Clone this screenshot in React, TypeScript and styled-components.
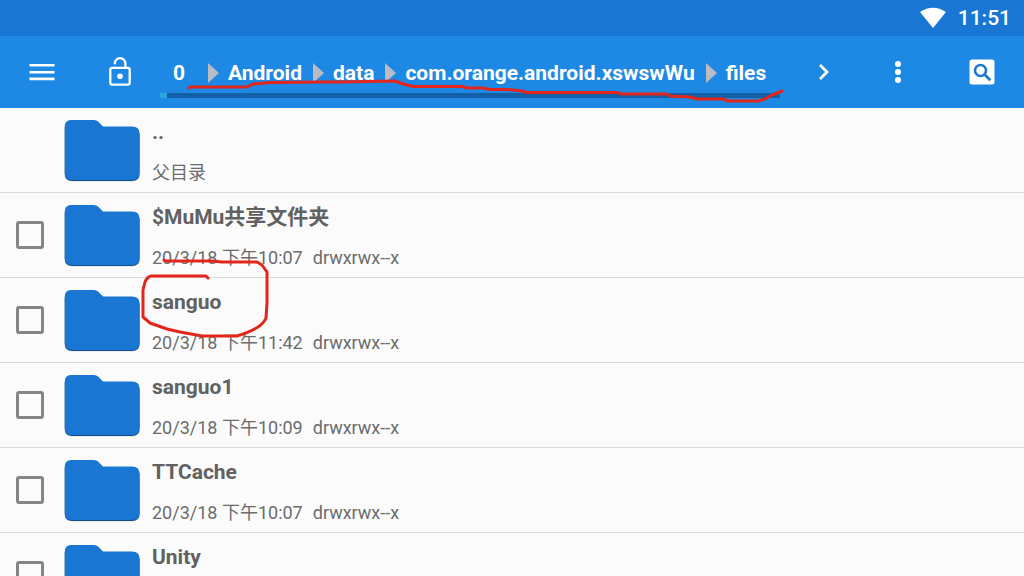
import React from "react";
import styled, { createGlobalStyle } from "styled-components";

const GlobalStyle = createGlobalStyle`
  * { box-sizing: border-box; }
  body {
    margin: 0;
    background: #fbfbfb;
    font-family: Roboto, "Noto Sans CJK SC", sans-serif;
  }
`;

const Screen = styled.div`
  position: relative;
  display: flex;
  flex-direction: column;
  height: 100vh;
  overflow: hidden;
`;

const StatusBar = styled.div`
  display: flex;
  flex: none;
  align-items: center;
  justify-content: flex-end;
  gap: 12px;
  height: 36px;
  padding: 0 13px 0 12px;
  background: #1976d2;
  color: #fff;
  font-size: 21px;
  font-weight: 500;
  line-height: 36px;
`;

const Toolbar = styled.header`
  display: flex;
  flex: none;
  align-items: stretch;
  height: 72px;
  background: #1e88e5;
`;

const IconButton = styled.button<{ $width: number; $gap?: number }>`
  display: flex;
  flex: none;
  align-items: center;
  justify-content: center;
  width: ${(p) => p.$width}px;
  margin-left: ${(p) => p.$gap ?? 0}px;
  padding: 0;
  border: 0;
  background: none;
  color: #fff;
`;

const PathArea = styled.nav`
  display: flex;
  flex: 1;
  flex-direction: column;
  min-width: 0;
  margin-left: 4px;
  padding-bottom: 10px;
`;

const Crumbs = styled.ol`
  display: flex;
  flex: 1;
  align-items: center;
  margin: 0;
  padding: 16px 12px 0 13px;
  list-style: none;
`;

const Crumb = styled.li`
  display: flex;
  align-items: center;
  flex: none;

  &:first-child a { min-width: 24px; }
`;

const CrumbLink = styled.a`
  color: #fff;
  font-size: 21px;
  font-weight: 700;
  line-height: 24px;
  text-decoration: none;
`;

const CrumbArrow = styled.svg`
  margin: 0 9px 0 11px;
`;

const StorageTrack = styled.div`
  height: 5px;
  background: #1460a6;
`;

const StorageFill = styled.div`
  width: 7px;
  height: 100%;
  background: #2ea3dd;
`;

const FileList = styled.ul`
  flex: 1;
  min-height: 0;
  margin: 0;
  padding: 0;
  overflow: hidden;
  list-style: none;
`;

const Row = styled.li`
  display: flex;
  height: 85px;
  border-bottom: 1px solid #d9d9d9;
`;

const CheckCell = styled.div`
  display: flex;
  flex: none;
  align-items: center;
  width: 60px;
  padding-left: 16px;
`;

const Checkbox = styled.input`
  appearance: none;
  width: 28px;
  height: 28px;
  margin: 0;
  border: 3px solid #858585;
  border-radius: 3px;
`;

const FolderSvg = styled.svg`
  flex: none;
  margin: 8px 8px 0 0;
`;

const Details = styled.label`
  display: flex;
  flex: 1;
  flex-direction: column;
  justify-content: space-between;
  min-width: 0;
  padding: 12px 0 7px;
  color: #616161;
`;

const Name = styled.span`
  font-size: 21px;
  font-weight: 700;
  line-height: 24px;
`;

const Meta = styled.span`
  display: flex;
  gap: 10px;
  color: #6c6c6c;
  font-size: 18px;
  line-height: 24px;
`;

const Annotations = styled.svg`
  position: absolute;
  top: 0;
  left: 0;
  pointer-events: none;
`;

const path = ["0", "Android", "data", "com.orange.android.xswswWu", "files"];

type Entry = { name: string; meta: string[]; parent?: boolean };

const entries: Entry[] = [
  { name: "..", meta: ["父目录"], parent: true },
  { name: "$MuMu共享文件夹", meta: ["20/3/18 下午10:07", "drwxrwx--x"] },
  { name: "sanguo", meta: ["20/3/18 下午11:42", "drwxrwx--x"] },
  { name: "sanguo1", meta: ["20/3/18 下午10:09", "drwxrwx--x"] },
  { name: "TTCache", meta: ["20/3/18 下午10:07", "drwxrwx--x"] },
  { name: "Unity", meta: [] },
];

const FOLDER =
  "M11 4H34Q36.500 4 38 5.500L43 10.500H72Q79.500 10.500 79.500 17.500V57Q79.500 64 72 64H12Q4.800 64 4.800 57V11Q4.800 4 11 4Z";

function Folder() {
  return (
    <FolderSvg width="84" height="70" viewBox="0 0 84 70" aria-hidden="true">
      <path d={FOLDER} fill="#000" opacity="0.1" stroke="#000" strokeWidth="1" transform="translate(0 1)" />
      <path d={FOLDER} fill="#134f8f" transform="translate(0 1)" />
      <path d={FOLDER} fill="#1976d2" />
    </FolderSvg>
  );
}

function FileRow({ entry, id }: { entry: Entry; id: string }) {
  return (
    <Row>
      <CheckCell>{!entry.parent && <Checkbox type="checkbox" id={id} />}</CheckCell>
      <Folder />
      <Details htmlFor={entry.parent ? undefined : id}>
        <Name>{entry.name}</Name>
        <Meta>
          {entry.meta.map((m) => (
            <span key={m}>{m}</span>
          ))}
        </Meta>
      </Details>
    </Row>
  );
}

export default function App() {
  return (
    <Screen>
      <GlobalStyle />
      <StatusBar>
        <svg width="26" height="22" viewBox="0 0 26 22" aria-hidden="true">
          <path d="M0 5Q13 -3.500 26 5L13 21Z" fill="#fff" />
        </svg>
        <span>11:51</span>
      </StatusBar>

      <Toolbar>
        <IconButton $width={84} aria-label="Menu">
          <svg width="26" height="20" viewBox="0 0 26 20" fill="#fff">
            <path d="M0.500 2H25.500V4.500H0.500ZM0.500 9H25.500V11.500H0.500ZM0.500 15.500H25.500V18.200H0.500Z" />
          </svg>
        </IconButton>
        <IconButton $width={72} aria-label="Unlocked">
          <svg width="24" height="32" viewBox="0 0 24 32" fill="none" stroke="#fff" strokeWidth="2.300">
            <rect x="2.300" y="11.800" width="19.400" height="16.800" rx="1.800" />
            <path d="M6.800 8.200V7.500A5.300 5.300 0 0 1 17.400 7.500V12" />
            <circle cx="12" cy="20.200" r="2.800" fill="#fff" stroke="none" />
          </svg>
        </IconButton>
        <PathArea aria-label="Path">
          <Crumbs>
            {path.map((part, i) => (
              <Crumb key={part}>
                {i > 0 && (
                  <CrumbArrow width="11" height="20" viewBox="0 0 11 20" aria-hidden="true">
                    <path d="M0 0L11 10L0 20Z" fill="#b9bcc2" />
                  </CrumbArrow>
                )}
                <CrumbLink href="#">{part}</CrumbLink>
              </Crumb>
            ))}
          </Crumbs>
          <StorageTrack>
            <StorageFill />
          </StorageTrack>
        </PathArea>
        <IconButton $width={88} aria-label="Forward">
          <svg width="12" height="18" viewBox="0 0 12 18" fill="none" stroke="#fff" strokeWidth="2.800">
            <path d="M2 2L9 9L2 16" />
          </svg>
        </IconButton>
        <IconButton $width={60} aria-label="More options">
          <svg width="8" height="24" viewBox="0 0 8 24" fill="#fff">
            <circle cx="4" cy="4" r="3" />
            <circle cx="4" cy="12" r="3" />
            <circle cx="4" cy="20" r="3" />
          </svg>
        </IconButton>
        <IconButton $width={84} $gap={12} aria-label="Search">
          <svg width="26" height="26" viewBox="0 0 26 26" fill="none">
            <rect x="0.500" y="0.500" width="25" height="25" rx="2.500" fill="#fff" />
            <circle cx="11.500" cy="11.500" r="5.500" stroke="#1e78cc" strokeWidth="2.600" />
            <path d="M15.300 15.300L21.300 21.300" stroke="#1e78cc" strokeWidth="2.800" />
          </svg>
        </IconButton>
      </Toolbar>

      <FileList>
        {entries.map((entry, i) => (
          <FileRow key={entry.name} entry={entry} id={`entry-${i}`} />
        ))}
      </FileList>

      <Annotations
        width="800"
        height="350"
        viewBox="0 0 800 350"
        fill="none"
        stroke="#e3261c"
        strokeWidth="3"
        strokeLinecap="round"
        strokeLinejoin="round"
        aria-hidden="true"
      >
        <path d="M189 88L190 87H247L253 84L270 82.500L320 82H340L395 81L403 84L413 86.500H462L467 88H483L490 89.500H507L522 91L527 92.500H617L622 94H667L670 96L690 97L697 99H723L728 101H758L765 99L772 95L777 93L782 91" />
        <path d="M164 260L166 261H212L222 262H257L262 265L267 272V303L266 318Q264 323 258 327Q250 332 237 336H202L191 334L180 332L167 329L150 323L143 317V290L145 282Q147 277 151 276H206L208 278" />
      </Annotations>
    </Screen>
  );
}
